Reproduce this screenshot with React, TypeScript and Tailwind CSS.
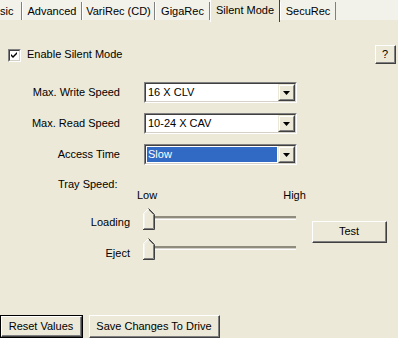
import React from "react";

function Tab({ label, w, selected, cls = "" }: { label: string; w: number; selected?: boolean; cls?: string }) {
  if (selected) {
    return (
      <div
        className="h-[22px] flex items-start justify-center pt-[4px] bg-[#ECE9D8] border-l border-l-white border-r border-r-[#404040] relative z-10"
        style={{ width: w }}
      >
        <span className="leading-[13px]">{label}</span>
      </div>
    );
  }
  return (
    <div
      className={"h-[18px] mb-[2px] flex items-center border-l border-l-white border-r border-r-[#808080] " + cls}
      style={{ width: w }}
    >
      <span className="leading-[13px] w-full text-center">{label}</span>
    </div>
  );
}

function Combo({ value, selected }: { value: string; selected?: boolean }) {
  return (
    <div className="w-[153px] h-[21px] border-t border-l border-t-[#808080] border-l-[#808080] border-b border-r border-b-white border-r-white">
      <div className="h-full flex border-t border-l border-t-[#404040] border-l-[#404040] border-b border-r border-b-[#D4D0C8] border-r-[#D4D0C8] bg-white">
        <div className="flex-1 flex items-center p-[1px]">
          <div
            className={
              "h-full w-full flex items-center pl-[1px] " +
              (selected ? "bg-[#316AC5] text-white" : "")
            }
          >
            <span className="leading-[13px]">{value}</span>
          </div>
        </div>
        <div className="w-[17px] h-full bg-[#ECE9D8] border-t border-l border-t-[#ECE9D8] border-l-[#ECE9D8] border-b border-r border-b-[#404040] border-r-[#404040]">
          <div className="w-full h-full flex items-center justify-center border-t border-l border-t-white border-l-white border-b border-r border-b-[#808080] border-r-[#808080]">
            <svg width="7" height="4" viewBox="0 0 7 4">
              <polygon points="0,0 7,0 3.5,4" fill="#000" />
            </svg>
          </div>
        </div>
      </div>
    </div>
  );
}

function Button({ label, w, h, def }: { label: string; w: number; h: number; def?: boolean }) {
  const inner = (
    <div className="w-full h-full border-t border-l border-t-white border-l-white border-b border-r border-b-[#404040] border-r-[#404040]">
      <div className="w-full h-full flex items-center justify-center border-b border-r border-b-[#808080] border-r-[#808080]">
        <span className="leading-[13px]">{label}</span>
      </div>
    </div>
  );
  return (
    <div className={"bg-[#ECE9D8] shrink-0 " + (def ? "border border-black" : "")} style={{ width: w, height: h }}>
      {inner}
    </div>
  );
}

function Thumb() {
  return (
    <svg width="12" height="22" viewBox="0 0 12 22" className="absolute left-0 top-0">
      <polygon points="0.5,5.5 5.5,0.5 10.5,5.5 10.5,21.5 0.5,21.5" fill="#ECE9D8" />
      <polyline points="0.5,21 0.5,5.5 5.5,0.5" fill="none" stroke="#FFFFFF" />
      <polyline points="1.5,20 1.5,6 5.5,2" fill="none" stroke="#F4F3EE" />
      <polyline points="5.5,0.5 11.5,6.5 11.5,21.5 0,21.5" fill="none" stroke="#404040" />
      <polyline points="6,2 10.5,6.5 10.5,20.5 1,20.5" fill="none" stroke="#808080" />
    </svg>
  );
}

function Slider() {
  return (
    <div className="relative w-[153px] h-[22px]">
      <div className="absolute left-0 right-0 top-[8px] h-[4px] border-t-2 border-t-[#8F8C7E] border-b border-b-white bg-[#D4D0C8]" />
      <Thumb />
    </div>
  );
}

export default function App() {
  return (
    <div className="w-[398px] h-[338px] bg-[#ECE9D8] overflow-hidden flex flex-col text-[11px] text-black font-['Liberation_Sans','Arial',sans-serif]">
      {/* tab strip */}
      <div className="h-[22px] shrink-0 flex items-end bg-[linear-gradient(#F3F2EA,#F3F2EA_20px,#ECE9D8_20px)]">
        <div className="w-[22px] h-[18px] mb-[2px] flex items-center border-r border-r-[#808080]">
          <span className="leading-[13px]">sic</span>
        </div>
        <Tab label="Advanced" w={60} />
        <Tab label="VariRec (CD)" w={73} />
        <Tab label="GigaRec" w={55} />
        <Tab label="Silent Mode" w={70} selected />
        <Tab label="SecuRec" w={56} />
        <div className="flex-1" />
      </div>

      {/* content */}
      <div className="flex-1 flex flex-col">
        {/* enable row */}
        <div className="mt-[23px] h-[19px] flex items-center pl-[8px] pr-[2px]">
          <div className="w-[13px] h-[13px] mt-[1px] border-t border-l border-t-[#808080] border-l-[#808080] border-b border-r border-b-white border-r-white">
            <div className="w-full h-full bg-white flex items-center justify-center border-t border-l border-t-[#404040] border-l-[#404040] border-b border-r border-b-[#D4D0C8] border-r-[#D4D0C8]">
              <svg width="7" height="7" viewBox="0 0 7 7">
                <path d="M0 2 L2 4 L6 0 L6 2 L2 6 L0 4 Z" fill="#000" />
              </svg>
            </div>
          </div>
          <span className="ml-[6px] leading-[13px]">Enable Silent Mode</span>
          <div className="flex-1" />
          <Button label="?" w={21} h={19} />
        </div>

        {/* combos */}
        <div className="mt-[18px] flex items-center">
          <div className="w-[120px] text-right leading-[13px]">Max. Write Speed</div>
          <div className="ml-[24px]">
            <Combo value="16 X CLV" />
          </div>
        </div>
        <div className="mt-[10px] flex items-center">
          <div className="w-[120px] text-right leading-[13px]">Max. Read Speed</div>
          <div className="ml-[24px]">
            <Combo value="10-24 X CAV" />
          </div>
        </div>
        <div className="mt-[10px] flex items-center">
          <div className="w-[120px] text-right leading-[13px]">Access Time</div>
          <div className="ml-[24px]">
            <Combo value="Slow" selected />
          </div>
        </div>

        {/* tray speed */}
        <div className="mt-[13px] pl-[58px] h-[12px] leading-[12px]">Tray Speed:</div>
        <div className="mt-[-1px] h-[12px] leading-[12px] flex">
          <span className="ml-[137px]">Low</span>
          <span className="ml-[126px]">High</span>
        </div>

        <div className="mt-[7px] flex">
          <div className="flex flex-col">
            <div className="flex items-center">
              <div className="w-[130px] text-right leading-[13px] pt-[7px]">Loading</div>
              <div className="ml-[13px]">
                <Slider />
              </div>
            </div>
            <div className="mt-[8px] flex items-center">
              <div className="w-[130px] text-right leading-[13px] pt-[9px]">Eject</div>
              <div className="ml-[13px]">
                <Slider />
              </div>
            </div>
          </div>
          <div className="ml-[16px] mt-[13px]">
            <Button label="Test" w={75} h={22} />
          </div>
        </div>

        {/* bottom buttons */}
        <div className="mt-auto flex gap-[6px]">
          <Button label="Reset Values" w={83} h={23} def />
          <Button label="Save Changes To Drive" w={131} h={23} />
        </div>
      </div>
    </div>
  );
}
